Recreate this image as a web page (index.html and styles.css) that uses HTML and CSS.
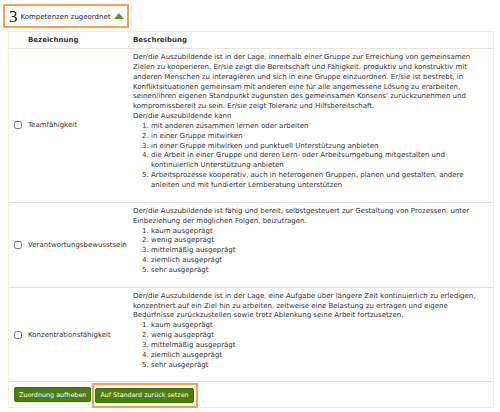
FILE: index.html
```html
<!DOCTYPE html>
<html lang="de">
<head>
<meta charset="utf-8">
<title>Kompetenzen</title>
<link rel="stylesheet" href="styles.css">
</head>
<body>
<div class="title">
  <span class="count">3</span>
  <span class="title-text">Kompetenzen zugeordnet</span>
  <svg class="caret" width="10" height="6" viewBox="0 0 10 6"><polygon points="5,0 10,6 0,6" fill="#5c9c25"/></svg>
</div>
<div class="panel">
  <table class="comp">
    <colgroup><col class="c1"><col></colgroup>
    <thead>
      <tr><th class="h1">Bezeichnung</th><th class="h2">Beschreibung</th></tr>
    </thead>
    <tbody>
      <tr>
        <td class="name"><label><input type="checkbox"><span>Teamfähigkeit</span></label></td>
        <td class="desc">
          <p>Der/die Auszubildende ist in der Lage, innerhalb einer Gruppe zur Erreichung von gemeinsamen<br>Zielen zu kooperieren. Er/sie zeigt die Bereitschaft und Fähigkeit, produktiv und konstruktiv mit<br>anderen Menschen zu interagieren und sich in eine Gruppe einzuordnen. Er/sie ist bestrebt, in<br>Konfliktsituationen gemeinsam mit anderen eine für alle angemessene Lösung zu erarbeiten,<br>seinen/ihren eigenen Standpunkt zugunsten des gemeinsamen Konsens' zurückzunehmen und<br>kompromissbereit zu sein. Er/sie zeigt Toleranz und Hilfsbereitschaft.<br>Der/die Auszubildende kann</p>
          <ol>
            <li>mit anderen zusammen lernen oder arbeiten</li>
            <li>in einer Gruppe mitwirken</li>
            <li>in einer Gruppe mitwirken und punktuell Unterstützung anbieten</li>
            <li>die Arbeit in einer Gruppe und deren Lern- oder Arbeitsumgebung mitgestalten und<br>kontinuierlich Unterstützung anbieten</li>
            <li>Arbeitsprozesse kooperativ, auch in heterogenen Gruppen, planen und gestalten, andere<br>anleiten und mit fundierter Lernberatung unterstützen</li>
          </ol>
        </td>
      </tr>
      <tr>
        <td class="name"><label><input type="checkbox"><span>Verantwortungsbewusstsein</span></label></td>
        <td class="desc">
          <p>Der/die Auszubildende ist fähig und bereit, selbstgesteuert zur Gestaltung von Prozessen, unter<br>Einbeziehung der möglichen Folgen, beizutragen.</p>
          <ol>
            <li>kaum ausgeprägt</li>
            <li>wenig ausgeprägt</li>
            <li>mittelmäßig ausgeprägt</li>
            <li>ziemlich ausgeprägt</li>
            <li>sehr ausgeprägt</li>
          </ol>
        </td>
      </tr>
      <tr>
        <td class="name"><label><input type="checkbox"><span>Konzentrationsfähigkeit</span></label></td>
        <td class="desc">
          <p>Der/die Auszubildende ist in der Lage, eine Aufgabe über längere Zeit kontinuierlich zu erledigen,<br>konzentriert auf ein Ziel hin zu arbeiten, zeitweise eine Belastung zu ertragen und eigene<br>Bedürfnisse zurückzustellen sowie trotz Ablenkung seine Arbeit fortzusetzen.</p>
          <ol>
            <li>kaum ausgeprägt</li>
            <li>wenig ausgeprägt</li>
            <li>mittelmäßig ausgeprägt</li>
            <li>ziemlich ausgeprägt</li>
            <li>sehr ausgeprägt</li>
          </ol>
        </td>
      </tr>
    </tbody>
  </table>
  <div class="actions">
    <button class="btn" type="button">Zuordnung aufheben</button>
    <span class="highlight"><button class="btn" type="button">Auf Standard zurück setzen</button></span>
  </div>
</div>
</body>
</html>
```
FILE: styles.css
```css
html, body {
  margin: 0;
  padding: 0;
  background: #ffffff;
}
body {
  font-family: "DejaVu Sans", Verdana, sans-serif;
  font-size: 7px;
  color: #333333;
}
.title {
  display: flex;
  align-items: center;
  width: 118px;
  height: 20px;
  margin: 4px 0 0 3px;
  padding: 0 0 0 4px;
  border: 2px solid #f7a24f;
  box-sizing: content-box;
}
.count {
  font-family: "Liberation Serif", "Times New Roman", serif;
  font-size: 17px;
  line-height: 16px;
  color: #222;
  margin-right: 3px;
  margin-top: 1px;
}
.title-text {
  font-size: 7px;
  color: #222;
  margin-top: 2px;
}
.caret {
  margin-left: 3px;
  margin-top: -1px;
}
.panel {
  margin: 3px 6px 0 8px;
  border: 1px solid #f2f2cc;
}
.comp {
  width: 100%;
  border-collapse: collapse;
  table-layout: fixed;
}
.c1 { width: 119px; }
.comp th {
  text-align: left;
  font-weight: bold;
  height: 16px;
  padding: 0;
  border-bottom: 1px solid #e6e6da;
  color: #333;
}
.comp th.h1 { padding-left: 19px; }
.comp th.h2 { padding-left: 5px; }
.comp td {
  border-bottom: 1px solid #dddddd;
  padding: 0;
}
.name {
  vertical-align: middle;
  padding-left: 5px !important;
}
.name label {
  display: flex;
  align-items: center;
  gap: 6px;
}
.name input {
  width: 8px;
  height: 8px;
  margin: 0;
}
.desc {
  vertical-align: top;
  padding: 4px 5px 4px 5px !important;
  line-height: 9.85px;
  white-space: nowrap;
}
.desc p {
  margin: 0;
}
.desc ol {
  margin: 0 0 7px 0;
  padding-left: 18px;
}
.actions {
  display: flex;
  align-items: center;
  height: 25px;
  padding-left: 5px;
  gap: 1px;
}
.btn {
  font-family: "DejaVu Sans", Verdana, sans-serif;
  font-size: 6.4px;
  font-weight: normal;
  color: #ffffff;
  background: #4a7e0e;
  border: 1px solid #3c6a07;
  border-radius: 2px;
  height: 15px;
  padding: 0 4px;
  margin: 0;
}
.highlight {
  display: inline-flex;
  border: 2px solid #f7a24f;
  padding: 3px 2px 3px 1px;
  margin-top: 1px;
}
```
